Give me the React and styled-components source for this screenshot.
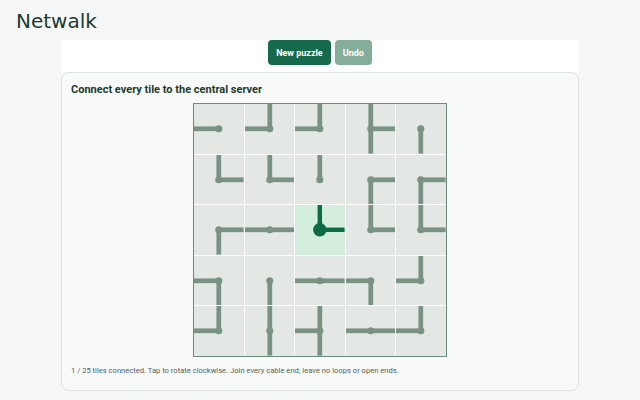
import React from "react";
import styled, { createGlobalStyle } from "styled-components";

const Global = createGlobalStyle`
  html, body { margin: 0; padding: 0; background: #f5f7f6; }
  body { font-family: Roboto, "Noto Sans", sans-serif; }
`;

const Page = styled.div`
  width: 640px;
  min-height: 400px;
  box-sizing: border-box;
`;

const Title = styled.h1`
  margin: 0;
  padding: 9px 0 0 16px;
  height: 40px;
  box-sizing: border-box;
  font-family: "DejaVu Sans", sans-serif;
  font-weight: 400;
  font-size: 20px;
  line-height: 24px;
  color: #1c3b2c;
`;

const Main = styled.main`
  width: 518px;
  margin: 0 auto;
`;

const Toolbar = styled.div`
  background: #ffffff;
  display: flex;
  justify-content: center;
  gap: 4px;
  padding: 0 0 7px;
`;

const Button = styled.button`
  height: 25px;
  padding: 0 8px;
  border: none;
  border-radius: 4px;
  font-family: Roboto, "Noto Sans", sans-serif;
  font-weight: 700;
  font-size: 9px;
  color: #ffffff;
  background: ${(p) => (p.$muted ? "#84ad9a" : "#16694a")};
  cursor: ${(p) => (p.$muted ? "default" : "pointer")};
`;

const Card = styled.section`
  background: #f8faf9;
  border: 1px solid #dde4e0;
  border-radius: 8px;
  padding: 9px 9px 13px;
`;

const Heading = styled.h2`
  margin: 0 0 5px;
  font-size: 11px;
  line-height: 16px;
  font-weight: 700;
  color: #1c3a2b;
`;

const Board = styled.div`
  width: 254px;
  margin: 0 auto;
  display: grid;
  grid-template-columns: repeat(5, 1fr);
  grid-auto-rows: 49.6px;
  gap: 1px;
  background: #ffffff;
  border: 1px solid #6e8a7b;
  box-sizing: border-box;
`;

const Tile = styled.div`
  background: ${(p) => (p.$server ? "#d3eedc" : "#e3e8e5")};
  cursor: pointer;
  svg { display: block; width: 100%; height: 100%; }
`;

const Status = styled.p`
  margin: 8px 0 0;
  font-size: 7.6px;
  line-height: 12px;
  color: #555f5a;
`;

// N, E, S, W arm endpoints in a 50x50 tile
const ARMS = {
  N: [25, 0],
  E: [50, 25],
  S: [25, 50],
  W: [0, 25],
};

const LAYOUT = [
  ["W", "WN", "WN", "NSE", "S"],
  ["NE", "NE", "N", "ES", "ES"],
  ["ES", "WE", "NE*", "NE", "NE"],
  ["WS", "S", "WE", "WS", "WN"],
  ["WN", "NS", "NSW", "WE", "WN"],
];

function Cable({ arms, server }) {
  const color = server ? "#0e6b45" : "#7a9283";
  const width = server ? 4.5 : 4.8;
  return (
    <svg viewBox="0 0 50 50" preserveAspectRatio="none">
      {arms.split("").map((d) => (
        <line
          key={d}
          x1="25"
          y1="25"
          x2={ARMS[d][0]}
          y2={ARMS[d][1]}
          stroke={color}
          strokeWidth={width}
        />
      ))}
      <circle cx="25" cy="25" r={server ? 6.8 : 3.6} fill={color} />
    </svg>
  );
}

export default function App() {
  return (
    <Page>
      <Global />
      <Title>Netwalk</Title>
      <Main>
        <Toolbar>
          <Button>New puzzle</Button>
          <Button $muted disabled>
            Undo
          </Button>
        </Toolbar>
        <Card>
          <Heading>Connect every tile to the central server</Heading>
          <Board>
            {LAYOUT.flat().map((t, i) => {
              const server = t.endsWith("*");
              return (
                <Tile key={i} $server={server}>
                  <Cable arms={t.replace("*", "")} server={server} />
                </Tile>
              );
            })}
          </Board>
          <Status>
            1 / 25 tiles connected. Tap to rotate clockwise. Join every cable
            end; leave no loops or open ends.
          </Status>
        </Card>
      </Main>
    </Page>
  );
}
